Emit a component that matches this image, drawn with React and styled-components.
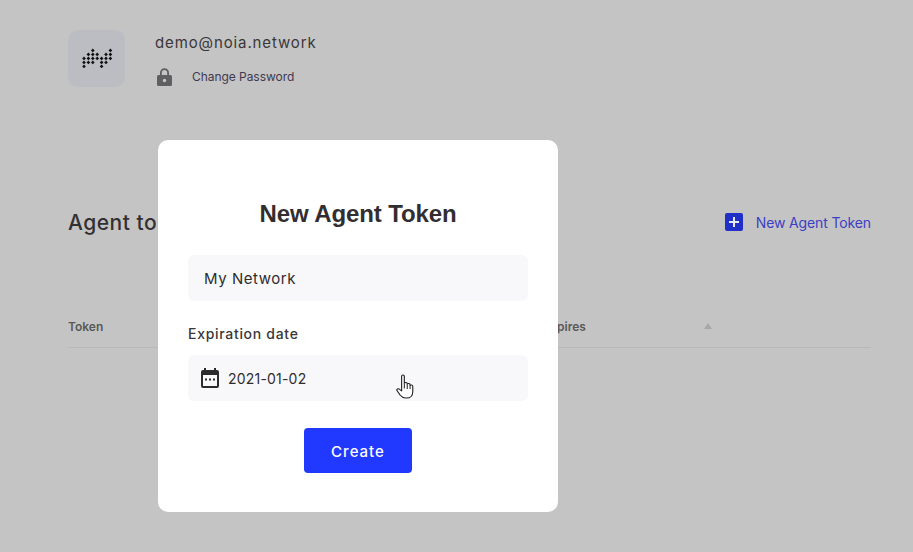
import React from 'react';
import styled, { createGlobalStyle } from 'styled-components';

const Global = createGlobalStyle`
  html, body { margin: 0; padding: 0; height: 100%; background: #c4c4c4; overflow: hidden; }
  #root { height: 100%; }
  * { box-sizing: border-box; }
`;
const Page = styled.div`
  position: relative; width: 913px; height: 552px; padding: 30px 42px 0 68px;
  background: #c4c4c4; color: #2f2c2e; font-family: Inter, "Liberation Sans", sans-serif; overflow: hidden;
`;
const Profile = styled.header`display: flex; align-items: flex-start; gap: 30px;`;
const Avatar = styled.div`
  width: 57px; height: 57px; border-radius: 10px; background: #bcbdc2; padding-bottom: 3px;
  display: flex; align-items: center; justify-content: center;
`;
const ProfileInfo = styled.div`display: flex; flex-direction: column; padding: 3px 0 0;`;
const Email = styled.div`font-size: 15px; line-height: 20px; letter-spacing: 0.88px; color: #3a3638;`;
const PasswordRow = styled.div`display: flex; align-items: center; gap: 20px; margin-top: 14px; padding-left: 2px;`;
const PasswordLink = styled.span`font-size: 12px; line-height: 20px; letter-spacing: -0.05px; color: #3f3a50;`;
const TitleRow = styled.div`display: flex; align-items: center; justify-content: space-between; margin-top: 120px; height: 30px;`;
const Heading = styled.h2`margin: 0; font-size: 21px; font-weight: 500; color: #333031; letter-spacing: 0.5px;`;
const AddLink = styled.div`display: flex; align-items: center; gap: 13px; font-size: 14px; color: #3c3fc4; letter-spacing: -0.13px;`;
const PlusBox = styled.span`
  width: 18px; height: 18px; border-radius: 2px; background: #1f2fc8;
  display: flex; align-items: center; justify-content: center;
`;
const TableHead = styled.div`
  display: grid; grid-template-columns: 475px 161px 1fr; align-items: center;
  height: 43px; margin-top: 68px; border-bottom: 1px solid #b8b8b8;
  font-size: 12px; font-weight: 600; color: #5a5858;
`;
const Sort = styled.span`
  width: 0; height: 0; border-left: 4px solid transparent; border-right: 4px solid transparent;
  border-bottom: 6px solid #a8a8a8;
`;
const Modal = styled.section`
  position: absolute; left: 158px; top: 140px; width: 400px; height: 372px;
  background: #fff; border-radius: 10px; padding: 59px 30px 0;
  display: flex; flex-direction: column;
`;
const ModalTitle = styled.h1`
  margin: 0; text-align: center; font-family: "Liberation Sans", Arial, sans-serif;
  font-size: 24px; line-height: 30px; font-weight: 700; letter-spacing: -0.12px; color: #322e30;
`;
const Field = styled.div`
  height: 46px; margin-top: ${p => p.$top || 0}px; padding-left: ${p => p.$pad || 16}px; border-radius: 6px; background: #f8f8fb;
  display: flex; align-items: center; gap: 9px; font-size: 15px; color: #2f2c2e; letter-spacing: 0.55px;
  position: relative;
`;
const Label = styled.div`margin-top: 23px; height: 20px; line-height: 20px; font-size: 14px; font-weight: 500; color: #3a3638; letter-spacing: 0.7px; margin-bottom: 11px;`;
const DateText = styled.span`font-size: 14px; letter-spacing: 0.2px;`;
const Pointer = styled.svg`position: absolute; left: 208px; top: 19px;`;
const Create = styled.button`
  align-self: center; width: 108px; height: 45px; margin-top: 27px; padding: 2px 0 0; border: 0; border-radius: 4px;
  background: #2139ff; color: #fff; font-family: Inter, "Liberation Sans", sans-serif; font-size: 15px; font-weight: 500; letter-spacing: 1px;
`;

const logoCols = [[2,3,4],[1,2,3],[0,1,2,3],[1,2],[2,3,4],[1,2,3],[0,1,2]];
const Logo = () => (
  <svg width="32" height="21" viewBox="0 0 32 21" aria-hidden="true">
    {logoCols.flatMap((rows, c) => rows.map(r => (
      <rect key={c + '-' + r} x={1.7 + c * 4.4} y={2.1 + r * 4} width="2.6" height="2.6" fill="#111" transform={`rotate(45 ${3 + c * 4.4} ${3.4 + r * 4})`} />
    )))}
  </svg>
);
const Lock = () => (
  <svg width="15" height="18" viewBox="0 0 15 18" aria-hidden="true">
    <path fill="#5f5e60" d="M3 7V4.800a4.500 4.500 0 0 1 9 0V7h1.500A1.500 1.500 0 0 1 15 8.500v8a1.500 1.500 0 0 1-1.500 1.500h-12A1.500 1.500 0 0 1 0 16.500v-8A1.500 1.500 0 0 1 1.500 7H3zM4.800 7h5.400V4.800a2.700 2.700 0 0 0-5.400 0V7z" />
    <circle cx="7.500" cy="12.500" r="1.700" fill="#c4c4c4" />
  </svg>
);
const Plus = () => (
  <svg width="10" height="10" viewBox="0 0 10 10" aria-hidden="true"><path d="M5 0v10M0 5h10" stroke="#e8e8f0" strokeWidth="2" /></svg>
);
const Calendar = () => (
  <svg width="18" height="20" viewBox="0 0 18 20" aria-hidden="true">
    <path fill="#2b2b2e" d="M3 0h2v2h8V0h2v2h1a2 2 0 0 1 2 2v14a2 2 0 0 1-2 2H2a2 2 0 0 1-2-2V4a2 2 0 0 1 2-2h1V0zM2 7v11h14V7H2z" />
    <path fill="#2b2b2e" d="M4 10.500h2v2H4zM8 10.500h2v2H8zM12 10.500h2v2h-2z" />
  </svg>
);
const Hand = () => (
  <Pointer width="18" height="25" viewBox="0 0 16 25" preserveAspectRatio="none" aria-hidden="true">
    <path fill="#fff" stroke="#222" strokeWidth="1" strokeLinejoin="round" d="M5 2.200C5 .6 7.400.6 7.400 2.200v7c.5-1.200 2.600-1 2.600.4v.6c.5-1.100 2.500-.9 2.500.5v.8c.6-1 2.400-.7 2.400.8V18c0 3.500-2.200 6-5.500 6H8.500C6.300 24 5 23 3.800 21.300L1 16.800c-.9-1.500 1-2.800 2.200-1.500L5 17V2.200z" />
    <path stroke="#222" strokeWidth=".9" d="M7.400 9.500v5M10 10.500v4.500M12.500 11.500v3.500" fill="none" />
  </Pointer>
);

export default function App() {
  return (
    <Page>
      <Global />
      <Profile>
        <Avatar><Logo /></Avatar>
        <ProfileInfo>
          <Email>demo@noia.network</Email>
          <PasswordRow><Lock /><PasswordLink>Change Password</PasswordLink></PasswordRow>
        </ProfileInfo>
      </Profile>
      <TitleRow>
        <Heading>Agent tokens</Heading>
        <AddLink><PlusBox><Plus /></PlusBox>New Agent Token</AddLink>
      </TitleRow>
      <TableHead><span>Token</span><span>Expires</span><Sort /></TableHead>
      <Modal>
        <ModalTitle>New Agent Token</ModalTitle>
        <Field $top={26}>My Network</Field>
        <Label>Expiration date</Label>
        <Field $pad={13}><Calendar /><DateText>2021-01-02</DateText><Hand /></Field>
        <Create>Create</Create>
      </Modal>
    </Page>
  );
}
